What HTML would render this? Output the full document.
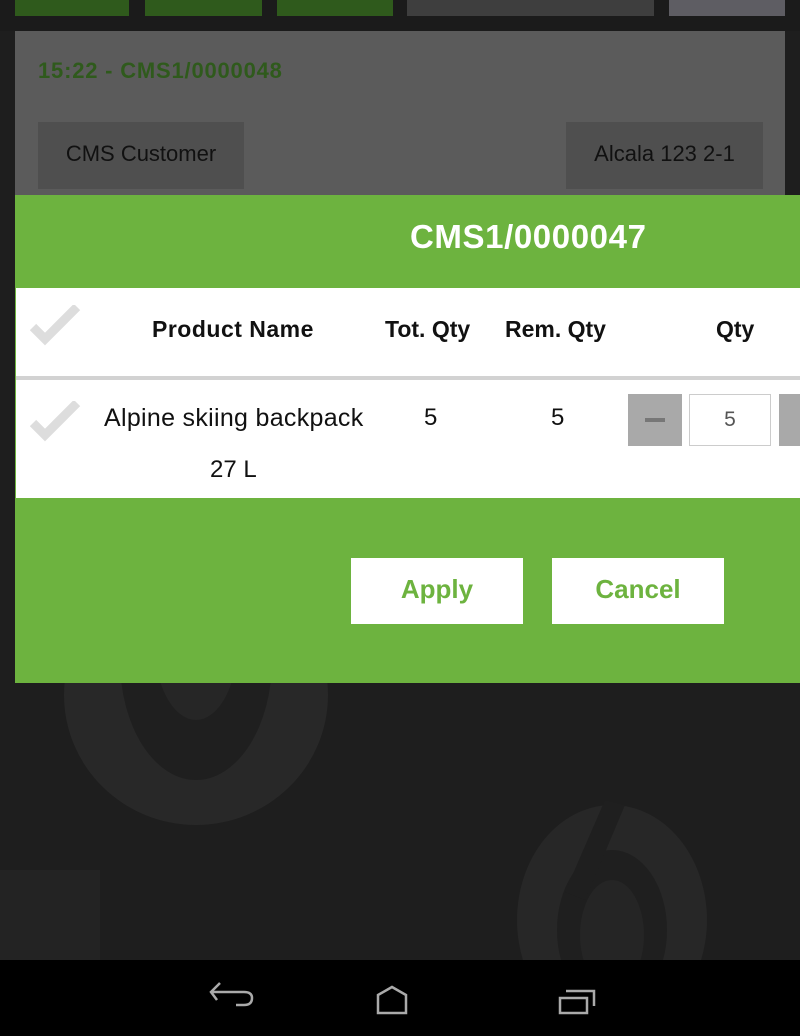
<!DOCTYPE html>
<html><head><meta charset="utf-8"><style>
*{margin:0;padding:0;box-sizing:border-box}
body{width:800px;height:1036px;overflow:hidden;background:#1f1f1f;font-family:"Liberation Sans",sans-serif;position:relative}
.a{position:absolute}
.t{font-weight:bold}
</style></head><body>
<div class="a" style="left:0;top:0;width:800px;height:960px;background:#1e1e1e"></div>
<svg class="a" style="left:0;top:600px" width="800" height="360">
<rect x="0" y="270" width="100" height="90" fill="#232323"/>
<ellipse cx="196" cy="95" rx="132" ry="130" fill="#282828"/>
<ellipse cx="196" cy="60" rx="76" ry="120" fill="#1f1f1f"/>
<ellipse cx="196" cy="40" rx="42" ry="80" fill="#262626"/>
<ellipse cx="612" cy="320" rx="95" ry="115" fill="#272727"/>
<ellipse cx="612" cy="330" rx="55" ry="80" fill="#1f1f1f"/>
<ellipse cx="612" cy="335" rx="32" ry="55" fill="#252525"/>
<polygon points="605,200 625,205 585,300 565,292" fill="#1f1f1f"/>
</svg>
<div class="a" style="left:0;top:0;width:800px;height:31px;background:#1b1b1b"></div>
<div class="a" style="left:15px;top:0;width:114px;height:16px;background:#2f5a1c"></div>
<div class="a" style="left:145px;top:0;width:117px;height:16px;background:#2f5a1c"></div>
<div class="a" style="left:277px;top:0;width:116px;height:16px;background:#2f5a1c"></div>
<div class="a" style="left:407px;top:0;width:247px;height:16px;background:#3e3e3e"></div>
<div class="a" style="left:669px;top:0;width:116px;height:16px;background:#5e5d63"></div>
<div class="a" style="left:15px;top:31px;width:770px;height:170px;background:#5b5b5b"></div>
<div class="a t" style="left:38px;top:58px;font-size:22px;color:#2f5a1c;letter-spacing:0.8px">15:22 - CMS1/0000048</div>
<div class="a" style="left:38px;top:122px;width:206px;height:67px;background:#4f4f4f;color:#111;font-size:22px;line-height:63px;text-align:center">CMS Customer</div>
<div class="a" style="left:566px;top:122px;width:197px;height:67px;background:#4f4f4f;color:#111;font-size:22px;line-height:63px;text-align:center">Alcala 123 2-1</div>
<div class="a" style="left:15px;top:195px;width:785px;height:488px;background:#6db33f"></div>
<div class="a t" style="left:410px;top:218px;font-size:33px;color:#fff;letter-spacing:0.6px">CMS1/0000047</div>
<div class="a" style="left:16px;top:288px;width:784px;height:210px;background:#fff"></div>
<div class="a" style="left:16px;top:376px;width:784px;height:4px;background:#d2d2d2"></div>
<svg class="a" style="left:30px;top:305px" width="52" height="42"><path d="M3 22 L15 34 L47 2" stroke="#ddd" stroke-width="9" fill="none"/></svg>
<svg class="a" style="left:30px;top:401px" width="52" height="42"><path d="M3 22 L15 34 L47 2" stroke="#ddd" stroke-width="9" fill="none"/></svg>
<div class="a t" style="left:152px;top:316px;font-size:23px;color:#111;letter-spacing:0.5px">Product Name</div>
<div class="a t" style="left:385px;top:316px;font-size:23px;color:#111">Tot. Qty</div>
<div class="a t" style="left:505px;top:316px;font-size:23px;color:#111">Rem. Qty</div>
<div class="a t" style="left:716px;top:316px;font-size:23px;color:#111">Qty</div>
<div class="a" style="left:104px;top:404px;font-size:25px;color:#111;letter-spacing:0.3px">Alpine skiing backpack</div>
<div class="a" style="left:210px;top:456px;font-size:24px;color:#111">27 L</div>
<div class="a" style="left:424px;top:404px;font-size:24px;color:#111">5</div>
<div class="a" style="left:551px;top:404px;font-size:24px;color:#111">5</div>
<div class="a" style="left:628px;top:394px;width:54px;height:52px;background:#a9a9a9"></div>
<div class="a" style="left:645px;top:418px;width:20px;height:4px;background:#777"></div>
<div class="a" style="left:689px;top:394px;width:82px;height:52px;border:1px solid #ccc;background:#fff;text-align:center;line-height:50px;font-size:21px;color:#555">5</div>
<div class="a" style="left:779px;top:394px;width:21px;height:52px;background:#a9a9a9"></div>
<div class="a" style="left:351px;top:558px;width:172px;height:66px;background:#fff;color:#6db33f;font-size:26px;line-height:62px;text-align:center"><span class="t">Apply</span></div>
<div class="a" style="left:552px;top:558px;width:172px;height:66px;background:#fff;color:#6db33f;font-size:26px;line-height:62px;text-align:center"><span class="t">Cancel</span></div>
<div class="a" style="left:0;top:960px;width:800px;height:76px;background:#000"></div>
<svg class="a" style="left:200px;top:980px" width="420" height="40" fill="none" stroke="#aaa" stroke-width="2.5">
<path d="M20 9 L11 18 L17 26 M11 18 L44 18 Q52 18 52 24 Q52 31 44 31 L36 31" transform="translate(0,-6)"/>
<path d="M178 33 L178 15 L192 7 L206 15 L206 33 Z"/>
<path d="M360 18 L360 33 L387 33 L387 18 Z M366 11 L394 11 L394 26"/>
</svg>
</body></html>
